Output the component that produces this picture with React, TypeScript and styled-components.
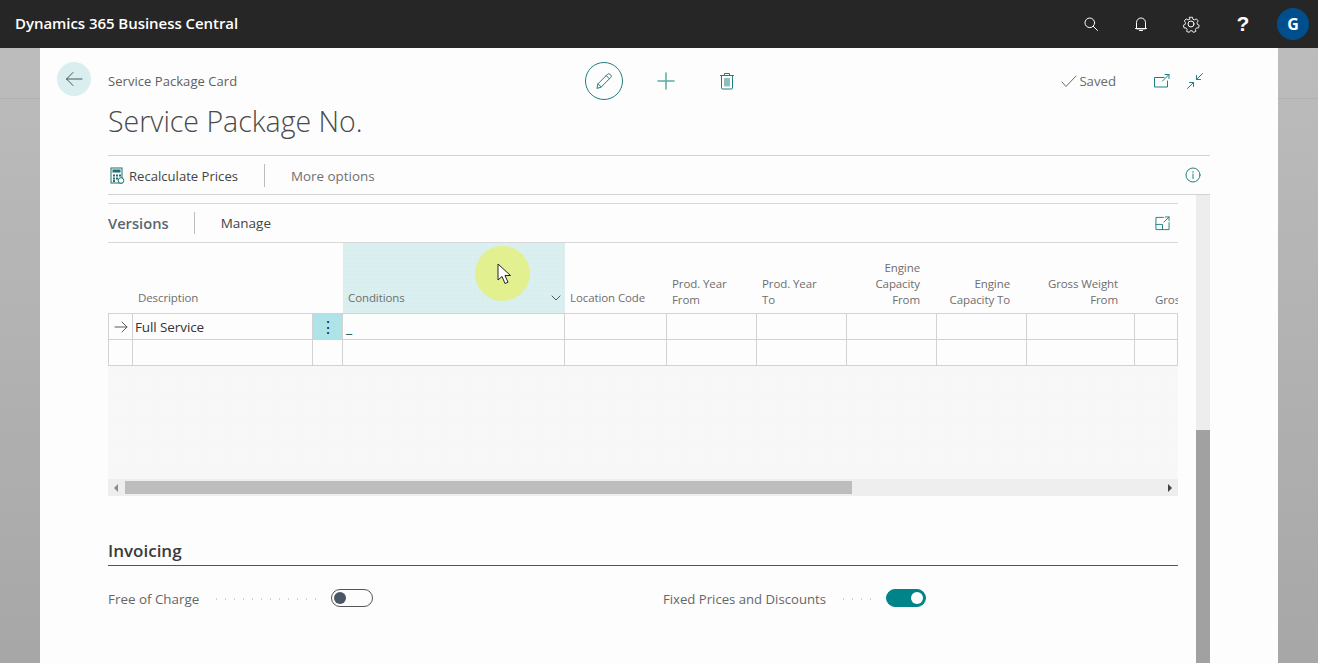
import React from 'react';
import styled, { createGlobalStyle } from 'styled-components';

const teal = '#1f7f7f';

const GlobalStyle = createGlobalStyle`
  html, body {
    margin: 0;
    padding: 0;
    height: 100%;
    overflow: hidden;
    font-family: 'Open Sans', 'Noto Sans', sans-serif;
  }
  * {
    box-sizing: border-box;
  }
`;

const Page = styled.div`
  width: 1318px;
  height: 663px;
  display: flex;
  flex-direction: column;
  overflow: hidden;
`;

const TopBar = styled.header`
  height: 48px;
  flex: none;
  display: flex;
  align-items: center;
  justify-content: space-between;
  padding: 0 9px 0 15px;
  background: #262626;
`;

const Brand = styled.div`
  color: #fff;
  font-size: 15px;
  font-weight: 600;
  letter-spacing: -0.05px;
  padding-bottom: 3px;
`;

const TopIcons = styled.div`
  display: flex;
  align-items: center;
`;

const TopIcon = styled.button`
  width: 50px;
  height: 48px;
  padding: 0;
  border: none;
  background: none;
  color: #fff;
  display: flex;
  align-items: center;
  justify-content: center;
`;

const Help = styled(TopIcon)`
  font-size: 21px;
  font-weight: 700;
  width: 53px;
  padding-left: 1px;
`;

const Avatar = styled.div`
  width: 32px;
  height: 32px;
  margin-left: 8px;
  border-radius: 50%;
  background: #004e8c;
  color: #fff;
  font-size: 16px;
  font-weight: 700;
  display: flex;
  align-items: center;
  justify-content: center;
`;

const Stage = styled.div`
  flex: 1;
  min-height: 0;
  display: flex;
  justify-content: center;
  background-image: linear-gradient(to bottom, transparent 50px, #b0b0b0 50px, #b0b0b0 51px, transparent 51px),
    linear-gradient(to bottom, #bcbcbc, #a7a7a7);
`;

const Card = styled.main`
  width: 1238px;
  background: #fdfdfd;
  display: flex;
  flex-direction: column;
  padding: 0 68px;
  position: relative;
`;

const BackButton = styled.button`
  position: absolute;
  left: 17px;
  top: 14px;
  width: 34px;
  height: 34px;
  padding: 0;
  border: none;
  border-radius: 50%;
  background: #daeeef;
  color: #44585a;
  display: flex;
  align-items: center;
  justify-content: center;
`;

const Header = styled.div`
  height: 107px;
  flex: none;
  padding-top: 14px;
  display: flex;
  flex-direction: column;
`;

const HeaderTop = styled.div`
  height: 38px;
  display: grid;
  grid-template-columns: 1fr auto 1fr;
  align-items: center;
`;

const Caption = styled.div`
  font-size: 13px;
  color: #5f5f5f;
  letter-spacing: 0.05px;
`;

const Actions = styled.div`
  display: flex;
  align-items: center;
  gap: 26px;
  margin-left: 12px;
`;

const EditButton = styled.button`
  width: 38px;
  height: 38px;
  padding: 0;
  border-radius: 50%;
  border: 1px solid ${teal};
  background: none;
  color: ${teal};
  display: flex;
  align-items: center;
  justify-content: center;
`;

const ActionIcon = styled.button<{ $soft?: boolean }>`
  width: 38px;
  height: 38px;
  padding: 0;
  border: none;
  background: none;
  color: ${p => (p.$soft ? '#5aa9a4' : teal)};
  display: flex;
  align-items: center;
  justify-content: center;
  margin-left: ${p => (p.$soft ? -2 : -3)}px;
`;

const HeaderRight = styled.div`
  display: flex;
  align-items: center;
  justify-content: flex-end;
  gap: 17px;
  padding-right: 7px;
  color: ${teal};
`;

const Saved = styled.div`
  display: flex;
  align-items: center;
  gap: 2px;
  margin-right: 21px;
  font-size: 13.2px;
  color: #6a6a6a;
`;

const Title = styled.h1`
  margin: 2px 0 0;
  font-size: 28.5px;
  line-height: 38px;
  font-weight: 300;
  color: #4a4a4a;
`;

const CommandBar = styled.div`
  height: 40px;
  flex: none;
  display: flex;
  align-items: center;
  padding-top: 1px;
  border-top: 1px solid #d2d2d2;
  border-bottom: 1px solid #d2d2d2;
  font-size: 13.1px;
`;

const CommandItem = styled.div`
  display: flex;
  align-items: center;
  gap: 3px;
  color: #444;
`;

const CommandDivider = styled.span`
  width: 1px;
  height: 23px;
  margin: 0 26px;
  background: #bdbdbd;
`;

const MoreOptions = styled.div`
  color: #707070;
  font-size: 13.4px;
  flex: 1;
`;

const InfoWrap = styled.div`
  color: ${teal};
  display: flex;
  padding: 0 9px 2px 0;
`;

const Scroller = styled.div`
  flex: 1;
  min-height: 0;
  display: flex;
  justify-content: space-between;
`;

const Content = styled.div`
  width: 1070px;
  padding-top: 8px;
`;

const VScroll = styled.div`
  width: 14px;
  display: flex;
  flex-direction: column;
  background: #ededed;
  padding-top: 235px;
`;

const VThumb = styled.div`
  flex: 1;
  background: #a1a1a1;
`;

const PartBar = styled.div`
  height: 40px;
  display: flex;
  align-items: center;
  border-top: 1px solid #d8d8d8;
  border-bottom: 1px solid #d8d8d8;
`;

const PartTitle = styled.div`
  font-size: 14.7px;
  font-weight: 600;
  color: #5c6670;
`;

const PartDivider = styled.span`
  width: 1px;
  height: 22px;
  margin: 0 26px 0 25px;
  background: #bdbdbd;
`;

const PartAction = styled.div`
  flex: 1;
  font-size: 13.5px;
  color: #444;
`;

const ExpandWrap = styled.div`
  display: flex;
  color: ${teal};
  padding-right: 8px;
`;

const gridColumns = '25px 180px 30px 222px 102px 90px 90px 90px 90px 108px 43px';

const Grid = styled.div`
  position: relative;
  display: grid;
  grid-template-columns: ${gridColumns};
  grid-template-rows: 71px 26px 26px;
  overflow: hidden;
`;

const HeadCell = styled.div<{ $right?: boolean; $active?: boolean; $wide?: number; $inset?: number; $stacked?: boolean }>`
  display: flex;
  align-items: flex-end;
  justify-content: ${p => (p.$right ? 'flex-end' : 'flex-start')};
  grid-column: span ${p => p.$wide ?? 1};
  padding: 0 ${p => (p.$right ? 17 : 4)}px ${p => (p.$stacked ? 5 : 7)}px ${p => p.$inset ?? 5}px;
  font-size: 11.5px;
  line-height: 16px;
  color: #6e6e6e;
  text-align: ${p => (p.$right ? 'right' : 'left')};
  white-space: pre-line;
  border-bottom: 1px solid #d2d2d2;
  background-color: ${p => (p.$active ? '#d9eeef' : 'transparent')};
  background-image: ${p => (p.$active ? 'radial-gradient(circle, #dff1f2 0.6px, transparent 0.8px)' : 'none')};
  background-size: 4px 4px;
  position: relative;
  letter-spacing: -0.1px;
`;

const Clipped = styled.span`
  white-space: nowrap;
`;

const SortCaret = styled.span`
  position: absolute;
  right: 4px;
  bottom: 10px;
  display: flex;
  color: #555;
`;

const Cell = styled.div<{ $first?: boolean; $menu?: boolean }>`
  border-right: 1px solid #d2d2d2;
  border-bottom: 1px solid #d2d2d2;
  border-left: ${p => (p.$first ? '1px solid #d2d2d2' : 'none')};
  background: ${p => (p.$menu ? '#aee4e8' : 'transparent')};
  display: flex;
  align-items: center;
  font-size: 13.5px;
  color: #333;
  padding: 1px 0 0 2px;
  letter-spacing: -0.1px;
`;

const ArrowCell = styled(Cell)`
  justify-content: center;
  padding: 0;
  color: #5a5a5a;
`;

const MenuDots = styled(Cell)`
  justify-content: center;
  padding: 0;
  color: #12343b;
  font-size: 16px;
  font-weight: 400;
`;

const Caret = styled(Cell)`
  align-items: flex-end;
  padding: 0 0 3px 3px;
  color: #1f5c60;
  font-size: 14px;
  line-height: 16px;
`;

const Pointer = styled.div`
  position: absolute;
  left: 367px;
  top: 3px;
  width: 55px;
  height: 55px;
  padding-left: 4px;
  border-radius: 50%;
  background: #e3f08f;
  display: flex;
  align-items: center;
  justify-content: center;
`;

const EmptyArea = styled.div`
  height: 113px;
  background-color: #f7f7f7;
  background-image: radial-gradient(circle, #fbfbfb 0.6px, transparent 0.8px);
  background-size: 3px 3px;
`;

const HScroll = styled.div`
  height: 17px;
  background: #eeeeee;
  display: flex;
  align-items: center;
  justify-content: space-between;
  padding: 0 6px;
  position: relative;
`;

const HThumb = styled.div`
  position: absolute;
  left: 17px;
  top: 2px;
  width: 727px;
  height: 13px;
  background: #bdbdbd;
`;

const Arrowhead = styled.span<{ $left?: boolean }>`
  width: 0;
  height: 0;
  border-top: 4px solid transparent;
  border-bottom: 4px solid transparent;
  ${p => (p.$left ? 'border-right: 4px solid #8a8a8a;' : 'border-left: 4px solid #444;')}
`;

const Section = styled.section`
  margin-top: 45px;
`;

const SectionTitle = styled.h2`
  margin: 0;
  height: 25px;
  font-size: 17px;
  line-height: 20px;
  font-weight: 600;
  color: #3a3a3a;
  border-bottom: 1px solid #555;
`;

const Fields = styled.div`
  display: grid;
  grid-template-columns: 555px 1fr;
  margin-top: 23px;
`;

const Field = styled.div`
  display: flex;
  align-items: center;
  height: 20px;
`;

const FieldLabel = styled.span<{ $tight?: boolean }>`
  font-size: ${p => (p.$tight ? 13.15 : 13.4)}px;
  color: #666;
`;

const Leader = styled.span<{ $length: number }>`
  width: ${p => p.$length}px;
  margin: 0 13px;
  height: 2px;
  background-image: radial-gradient(circle, #cfcfcf 1px, transparent 1px);
  background-size: 9px 2px;
`;

const Toggle = styled.span<{ $on?: boolean }>`
  width: ${p => (p.$on ? 40 : 42)}px;
  height: 18px;
  margin-bottom: 2px;
  border-radius: 9px;
  border: 1px solid ${p => (p.$on ? '#008489' : '#555')};
  background: ${p => (p.$on ? '#008489' : 'transparent')};
  display: flex;
  align-items: center;
  justify-content: ${p => (p.$on ? 'flex-end' : 'flex-start')};
  padding: 0 2px;
`;

const Knob = styled.span<{ $on?: boolean }>`
  width: 12px;
  height: 12px;
  border-radius: 50%;
  background: ${p => (p.$on ? '#fff' : '#4a5664')};
`;

type IconProps = { children: React.ReactNode; size?: number; box?: number; weight?: number };

const Icon = ({ children, size = 16, box = 16, weight = 1 }: IconProps) => (
  <svg
    width={size}
    height={size}
    viewBox={`0 0 ${box} ${box}`}
    fill="none"
    stroke="currentColor"
    strokeWidth={weight}
    strokeLinecap="round"
    strokeLinejoin="round"
  >
    {children}
  </svg>
);

const columns = [
  { label: 'Location Code' },
  { label: 'Prod. Year\nFrom' },
  { label: 'Prod. Year\nTo' },
  { label: 'Engine\nCapacity\nFrom', right: true },
  { label: 'Engine\nCapacity To', right: true },
  { label: 'Gross Weight\nFrom', right: true },
];

export default function App() {
  const blanks = columns.length + 1;
  return (
    <Page>
      <GlobalStyle />
      <TopBar>
        <Brand>Dynamics 365 Business Central</Brand>
        <TopIcons>
          <TopIcon aria-label="Search">
            <Icon>
              <circle cx="6.8" cy="6.8" r="4.8" />
              <path d="M10.3 10.3l4.2 4.2" />
            </Icon>
          </TopIcon>
          <TopIcon aria-label="Notifications">
            <Icon>
              <path d="M3.500 12.500V6.500a4.500 4.500 0 0 1 9 0v6z" />
              <path d="M2.500 12.500h11M6.500 14.500h3" />
            </Icon>
          </TopIcon>
          <TopIcon aria-label="Settings">
            <Icon size={18} box={18}>
              <circle cx="9" cy="9" r="3" />
              <path d="M7.400 1.500h3.200l.5 2.200 1.900.8 2-1.200 2 2.300-1.300 1.900.4 2 2 .9-.7 2.900-2.300.1-1.200 1.700.5 2.200-2.900 1-1.100-1.800h-2.200l-1.100 1.800-2.900-1 .5-2.200-1.200-1.700-2.300-.1-.7-2.900 2-.9.4-2-1.300-1.900 2-2.300 2 1.200 1.900-.8z" transform="translate(.9 .9) scale(.9)" />
            </Icon>
          </TopIcon>
          <Help aria-label="Help">?</Help>
          <Avatar>G</Avatar>
        </TopIcons>
      </TopBar>
      <Stage>
        <Card>
          <BackButton aria-label="Back">
            <Icon size={20} box={20}>
              <path d="M18 10H2.500M9 3.500L2.500 10 9 16.500" />
            </Icon>
          </BackButton>
          <Header>
            <HeaderTop>
              <Caption>Service Package Card</Caption>
              <Actions>
                <EditButton aria-label="Edit">
                  <Icon size={18} box={18}>
                    <path d="M2 16l1-4.200L12.600 2.200a1.600 1.600 0 0 1 2.300 0l.9.9a1.600 1.600 0 0 1 0 2.300L6.200 15z" />
                    <path d="M11.200 3.600l3.200 3.200M3 11.800L6.200 15" />
                  </Icon>
                </EditButton>
                <ActionIcon $soft aria-label="New">
                  <Icon size={18} box={18} weight={1.5}>
                    <path d="M9 1v16M1 9h16" />
                  </Icon>
                </ActionIcon>
                <ActionIcon aria-label="Delete">
                  <Icon size={18} box={18}>
                    <path d="M2.500 3.500h13M6.500 3.500V1.500h5v2M3.500 3.500V16a1 1 0 0 0 1 1h9a1 1 0 0 0 1-1V3.500M7 6.500v7.500M9 6.500v7.500M11 6.500v7.500" />
                  </Icon>
                </ActionIcon>
              </Actions>
              <HeaderRight>
                <Saved>
                  <Icon>
                    <path d="M1 9l4 4.500L15 3" />
                  </Icon>
                  Saved
                </Saved>
                <Icon>
                  <path d="M10 4.500H.5v9.500h13V8M8.500 8L15 1.500M11 1.500h4v4" />
                </Icon>
                <Icon>
                  <path d="M15.500.5L9.500 6.500M9.500 2.500v4h4M.5 15.500l6-6M2.500 9.500h4v4" />
                </Icon>
              </HeaderRight>
            </HeaderTop>
            <Title>Service Package No.</Title>
          </Header>
          <CommandBar>
            <CommandItem>
              <svg width="18" height="18" viewBox="0 0 18 18">
                <rect x="3" y="1" width="11" height="15" fill="none" stroke="#1f6f6f" />
                <rect x="4.500" y="2.500" width="8" height="3" fill="#1f6f6f" />
                <path d="M5 7.500h2v2H5zM8 7.500h2v2H8zM11 7.500h2v2h-2zM5 10.500h2v2H5zM5 13h2v2H5zM8 10.500h2v2H8z" fill="#1f6f6f" />
                <circle cx="13" cy="13.500" r="2.800" fill="#fdfdfd" stroke="#1f6f6f" />
              </svg>
              Recalculate Prices
            </CommandItem>
            <CommandDivider />
            <MoreOptions>More options</MoreOptions>
            <InfoWrap>
              <Icon>
                <circle cx="8" cy="8" r="7" />
                <path d="M8 7v4.500M8 4.500v.8" />
              </Icon>
            </InfoWrap>
          </CommandBar>
          <Scroller>
            <Content>
              <PartBar>
                <PartTitle>Versions</PartTitle>
                <PartDivider />
                <PartAction>Manage</PartAction>
                <ExpandWrap>
                  <Icon size={15}>
                    <path d="M9 1.500H1v13h14V7M1 9h7v5.500M9.500 6.500L15 1M11 1h4v4" />
                  </Icon>
                </ExpandWrap>
              </PartBar>
              <Grid>
                <HeadCell $wide={2} $inset={30}>Description</HeadCell>
                <HeadCell />
                <HeadCell $active>
                  Conditions
                  <SortCaret>
                    <Icon size={10} box={10}>
                      <path d="M1 3l4 4 4-4" />
                    </Icon>
                  </SortCaret>
                </HeadCell>
                {columns.map(c => (
                  <HeadCell key={c.label} $right={c.right} $stacked={c.label.includes('\n')}>
                    {c.label}
                  </HeadCell>
                ))}
                <HeadCell $inset={20} $stacked>
                  <Clipped>Gross Weight To</Clipped>
                </HeadCell>

                <ArrowCell $first>
                  <Icon size={14} box={14}>
                    <path d="M1 7h12M8 2l5 5-5 5" />
                  </Icon>
                </ArrowCell>
                <Cell>Full Service</Cell>
                <MenuDots $menu>⋮</MenuDots>
                <Caret>_</Caret>
                {Array.from({ length: blanks }, (_, i) => (
                  <Cell key={i} />
                ))}

                <Cell $first />
                <Cell />
                <Cell />
                <Cell />
                {Array.from({ length: blanks }, (_, i) => (
                  <Cell key={i} />
                ))}

                <Pointer>
                  <svg width="16" height="22" viewBox="0 0 16 22">
                    <path d="M1 1v16l4-3.500 3 7 3-1.300-3-6.700h5.500z" fill="#fff" stroke="#222" strokeWidth="1" strokeLinejoin="round" />
                  </svg>
                </Pointer>
              </Grid>
              <EmptyArea />
              <HScroll>
                <Arrowhead $left />
                <HThumb />
                <Arrowhead />
              </HScroll>
              <Section>
                <SectionTitle>Invoicing</SectionTitle>
                <Fields>
                  <Field>
                    <FieldLabel>Free of Charge</FieldLabel>
                    <Leader $length={106} />
                    <Toggle>
                      <Knob />
                    </Toggle>
                  </Field>
                  <Field>
                    <FieldLabel $tight>Fixed Prices and Discounts</FieldLabel>
                    <Leader $length={34} />
                    <Toggle $on>
                      <Knob $on />
                    </Toggle>
                  </Field>
                </Fields>
              </Section>
            </Content>
            <VScroll>
              <VThumb />
            </VScroll>
          </Scroller>
        </Card>
      </Stage>
    </Page>
  );
}
